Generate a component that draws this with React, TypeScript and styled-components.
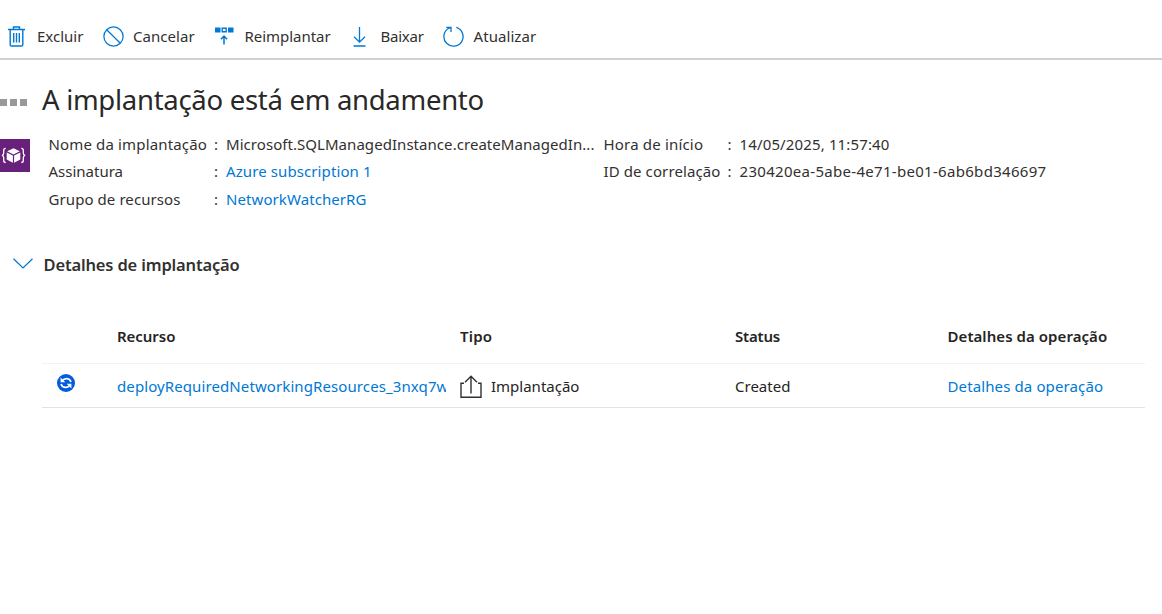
import React from 'react';
import styled, { createGlobalStyle } from 'styled-components';

const GlobalStyle = createGlobalStyle`
  * { box-sizing: border-box; }
  body {
    margin: 0;
    background: #fff;
    color: #323130;
    font-family: "Noto Sans", "Open Sans", sans-serif;
    font-size: 15px;
    line-height: 20px;
    overflow: hidden;
  }
`;

const Page = styled.main`
  width: 1162px;
  height: 614px;
  overflow: hidden;
`;

const Toolbar = styled.nav`
  display: flex;
  height: 60px;
  padding: 12px 0 0 8px;
  border-bottom: 2px solid #d2d0ce;
`;

const Command = styled.button<{ $width: number; $icon: number }>`
  display: grid;
  grid-template-columns: ${(p) => p.$icon}px auto;
  justify-content: start;
  align-items: center;
  flex: none;
  width: ${(p) => p.$width}px;
  height: 48px;
  padding: 0;
  border: 0;
  background: none;
  color: inherit;
  font: inherit;
  text-align: left;
  white-space: nowrap;

  svg { display: block; }
`;

const Label = styled.span<{ $track?: number }>`
  letter-spacing: ${(p) => p.$track ?? 0}px;
  white-space: nowrap;
`;

const TitleRow = styled.header`
  display: flex;
  align-items: center;
  height: 40px;
  margin-top: 20px;
`;

const Dots = styled.div`
  display: flex;
  gap: 3px;
  width: 42px;
  padding-top: 4px;

  i { width: 7px; height: 7px; background: #999; }
  i:first-child { width: 6.5px; }
`;

const Title = styled.h1`
  margin: 0;
  color: #292827;
  font-size: 27.5px;
  font-weight: 400;
  line-height: 38px;
  letter-spacing: -0.29px;
  white-space: nowrap;
`;

const Summary = styled.section`
  display: flex;
  height: 94px;
  padding-top: 10px;
`;

const Badge = styled.div`
  width: 30px;
  height: 33px;
  margin: 9px 18.5px 0 0;
  background: #68217a;
`;

const Facts = styled.dl<{ $label: number; $width: number }>`
  display: grid;
  grid-template-columns: ${(p) => p.$label}px 12px 1fr;
  grid-auto-rows: 27.5px;
  align-content: start;
  align-items: center;
  width: ${(p) => p.$width}px;
  margin: 0;

  dt, dd { margin: 0; white-space: nowrap; }
`;

const Link = styled.a<{ $track?: number }>`
  color: #0078d4;
  letter-spacing: ${(p) => p.$track ?? 0}px;
  text-decoration: none;
  white-space: nowrap;
`;

const SectionHeading = styled.h2`
  display: flex;
  align-items: center;
  height: 30px;
  margin: 36px 0 0 13px;
  font-size: 16.5px;
  font-weight: 600;

  svg { display: block; margin: -4px 10.5px 0 0; }
`;

const Table = styled.div`
  width: 1103px;
  margin: 30px 0 0 42px;
`;

const Row = styled.div<{ $height: number; $head?: boolean }>`
  display: grid;
  grid-template-columns: 75px 343px 275px 212.5px 1fr;
  align-items: center;
  height: ${(p) => p.$height}px;
  padding-bottom: ${(p) => (p.$head ? 2 : 0)}px;
  border-bottom: 1px solid ${(p) => (p.$head ? '#f3f2f1' : '#e4e3e2')};
  font-weight: ${(p) => (p.$head ? 600 : 400)};
  color: #252423;
`;

const Cell = styled.div<{ $clip?: number }>`
  display: flex;
  align-items: center;
  width: ${(p) => (p.$clip ? `${p.$clip}px` : 'auto')};
  overflow: hidden;
  white-space: nowrap;
`;

const SyncCell = styled(Cell)`
  padding: 0 0 5px 15px;
`;

const TypeCell = styled(Cell)`
  svg { flex: none; margin: 2px 9px 0 0; }
`;

const BLUE = '#0078d4';

const TrashIcon = () => (
  <svg width="17" height="21" viewBox="0 0 17 21" fill="none" stroke={BLUE} strokeWidth="1.4">
    <path d="M0 3.5h17M5.5 3V1h6v2M2.2 3.5v15.2q0 1.3 1.3 1.3h10q1.3 0 1.3-1.3V3.5" />
    <path d="M5.7 7v9.5M8.5 7v9.5M11.3 7v9.5" />
  </svg>
);

const CancelIcon = () => (
  <svg width="21" height="21" viewBox="0 0 21 21" fill="none" stroke={BLUE} strokeWidth="1.25">
    <circle cx="10.5" cy="10.5" r="9.6" />
    <path d="M3.7 3.7l13.6 13.6" />
  </svg>
);

const RedeployIcon = () => (
  <svg width="19" height="21" viewBox="0 0 19 21" fill="none">
    <path fill={BLUE} d="M0 1.5h5.5v5H0zM13 1.5h5.5v5H13z" />
    <path stroke={BLUE} strokeWidth="1.4" d="M7.2 2.2h4v3.6h-4z" />
    <path stroke={BLUE} strokeWidth="1.5" d="M9 18.5v-8M5.9 13.2L9 10.1l3.1 3.1" />
  </svg>
);

const DownloadIcon = () => (
  <svg width="13" height="21" viewBox="0 0 13 21" fill="none" stroke={BLUE} strokeWidth="1.3">
    <path d="M6.5 1v15M1 10.7l5.5 5.5 5.5-5.5M.5 20h12" />
  </svg>
);

const RefreshIcon = () => (
  <svg width="21" height="21" viewBox="0 0 21 21" fill="none" stroke={BLUE} strokeWidth="1.3">
    <path d="M13.3 1.4A9.6 9.6 0 1 1 5.6 2.3L8 1.3M3.2 1.3h4.8v4.8" />
  </svg>
);

const TemplateIcon = () => (
  <svg width="30" height="33" viewBox="0 0 30 33" fill="none">
    <path fill="#fff" d="M13.5 9.2l6.3 3.1-6.3 3.1-6.3-3.1zM6.7 13.4l6.2 3v7.3l-6.2-3.2zM20.3 13.4l-6.2 3v7.3l6.2-3.2z" />
    <path
      stroke="#fff"
      strokeWidth="1.3"
      d="M5.7 9.3q-2 0-2 2v2.8q0 2-1.8 2.3 1.8.3 1.8 2.3v2.8q0 2 2 2M21.3 9.3q2 0 2 2v2.8q0 2 1.8 2.3-1.8.3-1.8 2.3v2.8q0 2-2 2"
    />
  </svg>
);

const ChevronIcon = () => (
  <svg width="20" height="11" viewBox="0 0 20 11" fill="none" stroke={BLUE} strokeWidth="1.2">
    <path d="M.5.7L10 10 19.5.7" />
  </svg>
);

const SyncIcon = () => (
  <svg width="18" height="18" viewBox="0 0 18 18" fill="none">
    <circle cx="9" cy="9" r="9" fill="#015cda" />
    <path stroke="#fff" strokeWidth="1.7" d="M5 6.8Q7.2 4.3 10 4.6 13.2 5 13.9 8M13 11.2Q10.8 13.7 8 13.4 4.8 13 4.1 10" />
    <path fill="#fff" d="M3.6 3.6v4.7h4.7zM14.4 14.4V9.7H9.7z" />
  </svg>
);

const DeployIcon = () => (
  <svg width="22" height="23" viewBox="0 0 22 23" fill="none" stroke="#323130" strokeWidth="1.4">
    <path d="M4 8.3H1v14h20v-14h-3M11 18.5V1.5M5 7.3l6-6 6 6" />
  </svg>
);

const commands = [
  { text: 'Excluir', icon: <TrashIcon />, iconWidth: 29, width: 95, track: 0 },
  { text: 'Cancelar', icon: <CancelIcon />, iconWidth: 30, width: 112, track: 0.05 },
  { text: 'Reimplantar', icon: <RedeployIcon />, iconWidth: 29.5, width: 138, track: -0.03 },
  { text: 'Baixar', icon: <DownloadIcon />, iconWidth: 27.5, width: 90, track: -0.25 },
  { text: 'Atualizar', icon: <RefreshIcon />, iconWidth: 30.5, width: 100, track: 0.07 },
];

export default function App() {
  return (
    <Page>
      <GlobalStyle />
      <Toolbar>
        {commands.map((c) => (
          <Command key={c.text} $width={c.width} $icon={c.iconWidth}>
            {c.icon}
            <Label $track={c.track}>{c.text}</Label>
          </Command>
        ))}
      </Toolbar>

      <TitleRow>
        <Dots><i /><i /><i /></Dots>
        <Title>A implantação está em andamento</Title>
      </TitleRow>

      <Summary>
        <Badge><TemplateIcon /></Badge>
        <Facts $label={165.5} $width={555}>
          <dt><Label $track={0.15}>Nome da implantação</Label></dt>
          <dd>:</dd>
          <dd><Label $track={0.05}>Microsoft.SQLManagedInstance.createManagedIn...</Label></dd>
          <dt><Label>Assinatura</Label></dt>
          <dd>:</dd>
          <dd><Link $track={0.1}>Azure subscription 1</Link></dd>
          <dt><Label $track={0.08}>Grupo de recursos</Label></dt>
          <dd>:</dd>
          <dd><Link $track={0.08}>NetworkWatcherRG</Link></dd>
        </Facts>
        <Facts $label={124} $width={500}>
          <dt><Label $track={0.18}>Hora de início</Label></dt>
          <dd>:</dd>
          <dd><Label $track={0.14}>14/05/2025, 11:57:40</Label></dd>
          <dt><Label $track={0.1}>ID de correlação</Label></dt>
          <dd>:</dd>
          <dd><Label $track={0.3}>230420ea-5abe-4e71-be01-6ab6bd346697</Label></dd>
        </Facts>
      </Summary>

      <SectionHeading>
        <ChevronIcon />
        <Label $track={-0.16}>Detalhes de implantação</Label>
      </SectionHeading>

      <Table>
        <Row $height={54} $head>
          <Cell />
          <Cell><Label $track={-0.05}>Recurso</Label></Cell>
          <Cell><Label $track={0.2}>Tipo</Label></Cell>
          <Cell><Label $track={-0.2}>Status</Label></Cell>
          <Cell><Label $track={0.06}>Detalhes da operação</Label></Cell>
        </Row>
        <Row $height={44}>
          <SyncCell><SyncIcon /></SyncCell>
          <Cell $clip={328.5}><Link $track={0.1}>deployRequiredNetworkingResources_3nxq7w</Link></Cell>
          <TypeCell>
            <DeployIcon />
            <Label>Implantação</Label>
          </TypeCell>
          <Cell><Label>Created</Label></Cell>
          <Cell><Link $track={0.12}>Detalhes da operação</Link></Cell>
        </Row>
      </Table>
    </Page>
  );
}
